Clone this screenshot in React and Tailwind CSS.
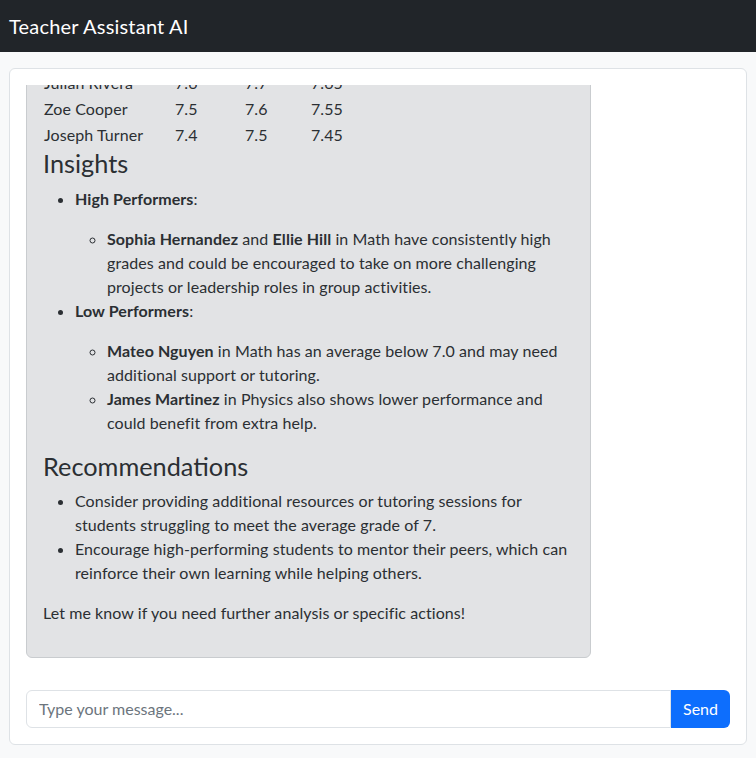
import { useState } from "react"

const rows = [
    ["Sophia Hernandez", "9.2", "9.0", "9.1"],
    ["Ellie Hill", "9.0", "8.9", "8.95"],
    ["Liam Johnson", "8.1", "8.0", "8.05"],
    ["Julian Rivera", "7.6", "7.7", "7.65"],
    ["Zoe Cooper", "7.5", "7.6", "7.55"],
    ["Joseph Turner", "7.4", "7.5", "7.45"],
]

function Bubble() {
    return (
        <div className="w-[565px] shrink-0 bg-[#e2e3e5] border border-[#c9cccf] rounded-md p-4 mb-4 text-[#2b2f33] tracking-[0.005em]">
            <table className="border-collapse mb-0 ml-px">
                <tbody>
                    {rows.map((r) => (
                        <tr key={r[0]} className="h-[26px]">
                            <td className="w-[131px] p-0">{r[0]}</td>
                            <td className="w-[70px] p-0">{r[1]}</td>
                            <td className="w-[66px] p-0">{r[2]}</td>
                            <td className="p-0">{r[3]}</td>
                        </tr>
                    ))}
                </tbody>
            </table>
            <h3 className="text-[25.3px] leading-[1.2] mb-2 tracking-normal">Insights</h3>
            <ul className="list-disc pl-8 mb-4">
                <li>
                    <p className="mb-4">
                        <strong className="font-bold">High Performers</strong>:
                    </p>
                    <ul className="list-[circle] pl-8">
                        <li>
                            <strong className="font-bold">Sophia Hernandez</strong> and{" "}
                            <strong className="font-bold">Ellie Hill</strong> in Math have consistently high grades and
                            could be encouraged to take on more challenging projects or leadership roles in group
                            activities.
                        </li>
                    </ul>
                </li>
                <li>
                    <p className="mb-4">
                        <strong className="font-bold">Low Performers</strong>:
                    </p>
                    <ul className="list-[circle] pl-8">
                        <li>
                            <strong className="font-bold">Mateo Nguyen</strong> in Math has an average below 7.0 and
                            may need additional support or tutoring.
                        </li>
                        <li>
                            <strong className="font-bold">James Martinez</strong> in Physics also shows lower
                            performance and could benefit from extra help.
                        </li>
                    </ul>
                </li>
            </ul>
            <h3 className="text-[25.3px] leading-[1.2] mb-2 tracking-normal">Recommendations</h3>
            <ul className="list-disc pl-8 mb-4">
                <li>Consider providing additional resources or tutoring sessions for students struggling to meet the average grade of 7.</li>
                <li>Encourage high-performing students to mentor their peers, which can reinforce their own learning while helping others.</li>
            </ul>
            <p className="mb-4">Let me know if you need further analysis or specific actions!</p>
        </div>
    )
}

export default function App() {
    const [text, setText] = useState("")

    return (
        <div className="min-h-screen bg-[#f8f9fa] text-base leading-6 font-['Lato',sans-serif]">
            <nav className="h-[52px] bg-[#212529] flex items-center px-[9px]">
                <span className="text-white text-xl tracking-[0.01em]">Teacher Assistant AI</span>
            </nav>

            <div className="px-[9px] pt-4">
                <div className="bg-white border border-[#dee2e6] rounded-md p-4">
                    <div className="h-[589px] overflow-hidden flex flex-col justify-end">
                        <Bubble />
                    </div>
                    <div className="flex mt-4 h-[38px]">
                        <input
                            className="flex-1 border border-[#dee2e6] rounded-l-md px-3 text-[#212529] placeholder:text-[#6c757d] outline-none"
                            placeholder="Type your message..."
                            value={text}
                            onChange={(e) => setText(e.target.value)}
                        />
                        <button className="bg-[#0d6efd] text-white px-3 rounded-r-md">Send</button>
                    </div>
                </div>
            </div>
        </div>
    )
}
